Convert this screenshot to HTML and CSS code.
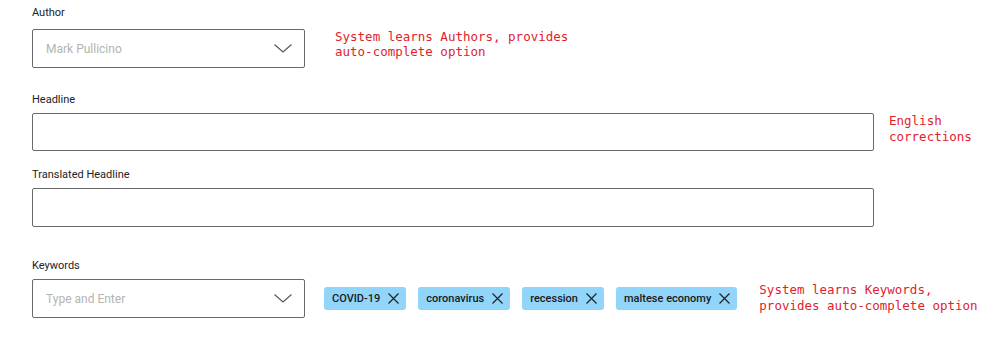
FILE: index.html
```html
<!DOCTYPE html>
<html>
<head>
<meta charset="utf-8">
<link rel="stylesheet" href="styles.css">
</head>
<body>
<main class="form">
  <section class="field field-author">
    <div class="label">Author</div>
    <div class="row">
      <div class="select">
        <span class="placeholder">Mark Pullicino</span>
        <svg class="chev" width="18" height="9" viewBox="0 0 18 9"><polyline points="0.5,0.5 9,8 17.5,0.5" fill="none" stroke="#555" stroke-width="1.1"/></svg>
      </div>
      <div class="note note-author">System learns Authors, provides<br>auto-complete option</div>
    </div>
  </section>

  <section class="field field-headline">
    <div class="label">Headline</div>
    <div class="row">
      <div class="input input-wide"></div>
      <div class="note note-headline">English<br>corrections</div>
    </div>
  </section>

  <section class="field field-translated">
    <div class="label">Translated Headline</div>
    <div class="row">
      <div class="input input-wide input-tall"></div>
    </div>
  </section>

  <section class="field field-keywords">
    <div class="label">Keywords</div>
    <div class="row">
      <div class="select">
        <span class="placeholder">Type and Enter</span>
        <svg class="chev" width="18" height="9" viewBox="0 0 18 9"><polyline points="0.5,0.5 9,8 17.5,0.5" fill="none" stroke="#555" stroke-width="1.1"/></svg>
      </div>
      <div class="chips">
        <span class="chip">COVID-19<svg class="x" width="11" height="11" viewBox="0 0 11 11"><path d="M0.5 0.5L10.5 10.5M10.5 0.5L0.5 10.5" stroke="#222" stroke-width="1.2"/></svg></span>
        <span class="chip">coronavirus<svg class="x" width="11" height="11" viewBox="0 0 11 11"><path d="M0.5 0.5L10.5 10.5M10.5 0.5L0.5 10.5" stroke="#222" stroke-width="1.2"/></svg></span>
        <span class="chip">recession<svg class="x" width="11" height="11" viewBox="0 0 11 11"><path d="M0.5 0.5L10.5 10.5M10.5 0.5L0.5 10.5" stroke="#222" stroke-width="1.2"/></svg></span>
        <span class="chip">maltese economy<svg class="x" width="11" height="11" viewBox="0 0 11 11"><path d="M0.5 0.5L10.5 10.5M10.5 0.5L0.5 10.5" stroke="#222" stroke-width="1.2"/></svg></span>
      </div>
      <div class="note note-keywords">System learns Keywords,<br>provides auto-complete option</div>
    </div>
  </section>
</main>
</body>
</html>
```
FILE: styles.css
```css
html, body {
  margin: 0;
  padding: 0;
  background: #ffffff;
}
body {
  font-family: Roboto, "Liberation Sans", Arial, sans-serif;
  color: #222;
}
.form {
  padding: 6px 0 0 32px;
}
.label {
  font-size: 11px;
  line-height: 14px;
  color: #222;
  margin-bottom: 9px;
}
.field-headline { margin-top: 25px; }
.field-headline .label { margin-bottom: 6px; }
.field-translated { margin-top: 17px; }
.field-translated .label { margin-bottom: 6px; }
.field-keywords { margin-top: 32px; }
.field-keywords .label { margin-bottom: 6px; }

.row {
  display: flex;
  align-items: flex-start;
}
.select {
  box-sizing: border-box;
  width: 273px;
  height: 39px;
  border: 1px solid #6a6a6a;
  border-radius: 2px;
  display: flex;
  align-items: center;
  justify-content: space-between;
  padding: 0 12px 0 13px;
  flex: none;
}
.placeholder {
  font-size: 12px;
  color: #b3b3b3;
}
.chev { display: block; }
.input {
  box-sizing: border-box;
  height: 38px;
  border: 1px solid #6a6a6a;
  border-radius: 2px;
  flex: none;
}
.input-wide { width: 842px; }
.input-tall { height: 39px; }

.note {
  font-family: "DejaVu Sans Mono", "Liberation Mono", monospace;
  font-size: 12.5px;
  line-height: 16px;
  color: #e2222b;
  white-space: nowrap;
}
.note-author { margin-left: 30px; line-height: 15px; }
.note-headline { margin-left: 15px; }
.note-keywords { margin-left: 22px; margin-top: 3px; }

.chips {
  display: flex;
  gap: 12px;
  margin-left: 19px;
  align-self: center;
}
.chip {
  display: inline-flex;
  align-items: center;
  height: 23px;
  box-sizing: border-box;
  padding: 0 7px 0 8px;
  background: #91d5fb;
  border-radius: 3px;
  font-size: 11px;
  font-weight: 500;
  color: #1a1a1a;
}
.chip .x {
  margin-left: 8px;
  display: block;
}
```
